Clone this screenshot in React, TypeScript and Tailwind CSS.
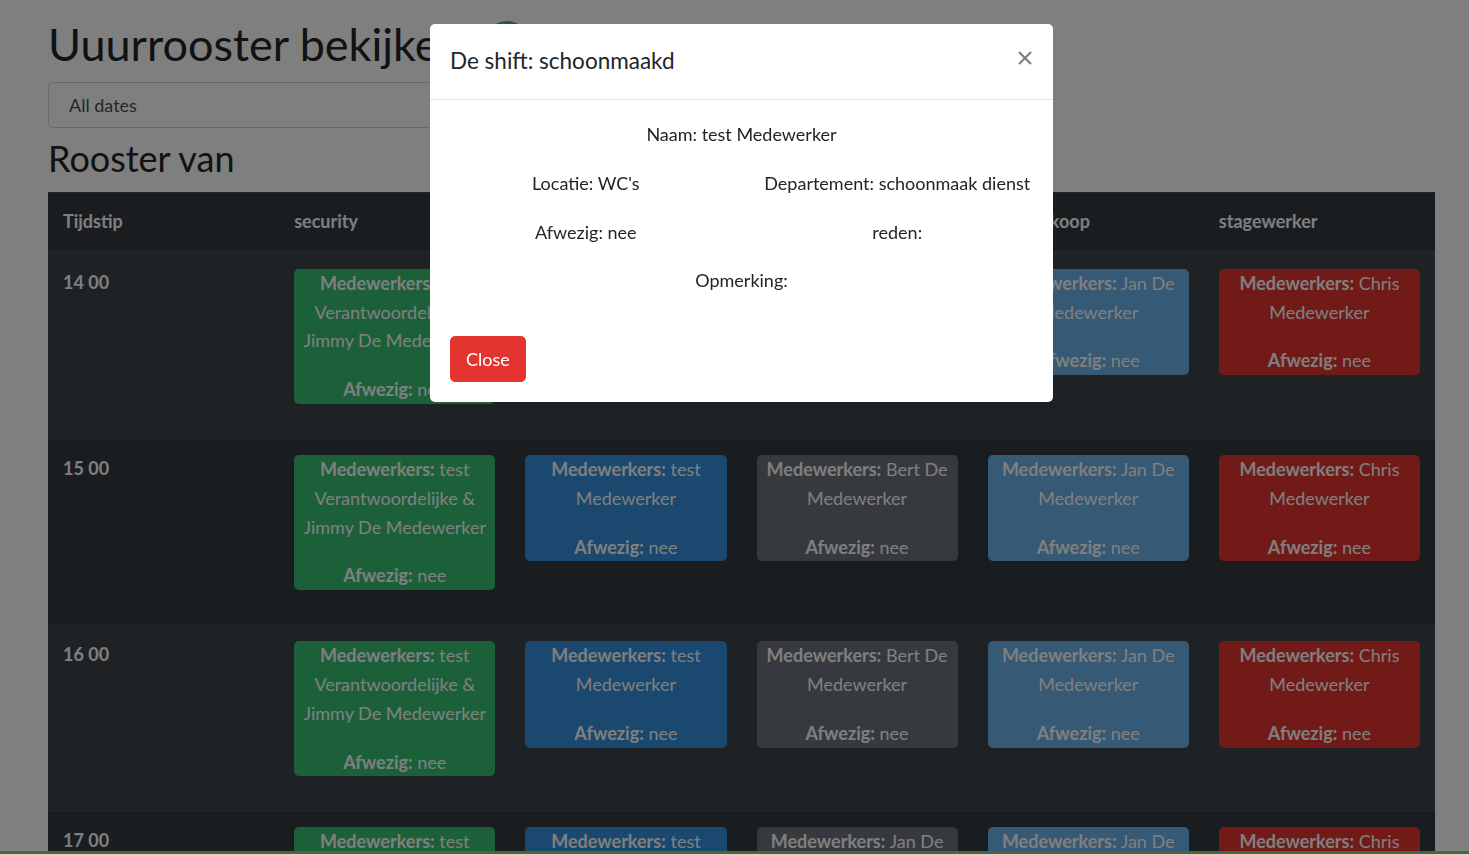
import { Fragment } from "react";

interface Shift {
  color: string;
  names: string[];
}

const columns = ["Tijdstip", "security", "schoonmaak dienst", "bar", "voorverkoop", "stagewerker"];

const baseRow: Shift[] = [
  { color: "bg-[#38c172]", names: ["test", "Verantwoordelijke &", "Jimmy De Medewerker"] },
  { color: "bg-[#3490dc]", names: ["test", "Medewerker"] },
  { color: "bg-[#6c757d]", names: ["Bert De", "Medewerker"] },
  { color: "bg-[#6cb2eb]", names: ["Jan De", "Medewerker"] },
  { color: "bg-[#e3342f]", names: ["Chris", "Medewerker"] },
];

const rows: { time: string; shifts: Shift[] }[] = [
  { time: "14 00", shifts: baseRow },
  { time: "15 00", shifts: baseRow },
  { time: "16 00", shifts: baseRow },
  {
    time: "17 00",
    shifts: [
      baseRow[0],
      baseRow[1],
      { color: "bg-[#6c757d]", names: ["Jan De", "Medewerker"] },
      baseRow[3],
      baseRow[4],
    ],
  },
];

function ShiftCard({ shift }: { shift: Shift }) {
  return (
    <div className={`${shift.color} mb-5 rounded-[5px] px-1 text-center text-white`}>
      <p className="mb-5">
        {shift.names.map((n, i) => (
          <Fragment key={i}>
            {i === 0 ? (
              <>
                <b className="font-bold">Medewerkers:</b> {n}
              </>
            ) : (
              n
            )}
            {i < shift.names.length - 1 && <br />}
          </Fragment>
        ))}
      </p>
      <p>
        <b className="font-bold">Afwezig:</b> nee
      </p>
    </div>
  );
}

function ShiftModal() {
  return (
    <div className="fixed inset-0 bg-black/50">
      <div className="ml-[430px] mt-[24px] w-[623px] rounded-[5px] bg-white text-[#212529]">
        <div className="flex h-[76px] items-start justify-between border-b border-[#dee2e6] px-5 pt-5">
          <h5 className="text-[22.5px] leading-[33.75px]">De shift: schoonmaakd</h5>
          <svg width="14" height="14" viewBox="0 0 14 14" className="mr-[1px] mt-[7px]">
            <path d="M1 1L13 13M13 1L1 13" stroke="#808080" strokeWidth="2.2" fill="none" />
          </svg>
        </div>
        <div className="pt-5 text-center">
          <p className="mb-5">Naam: test Medewerker</p>
          <div className="mb-5 grid grid-cols-2">
            <p>Locatie: WC's</p>
            <p>Departement: schoonmaak dienst</p>
          </div>
          <div className="mb-5 grid grid-cols-2">
            <p>Afwezig: nee</p>
            <p>reden:</p>
          </div>
          <p className="mb-[41px]">Opmerking:</p>
        </div>
        <div className="px-5 pb-5">
          <button className="rounded-[5px] border border-[#e3342f] bg-[#e3342f] px-[15px] py-[7.5px] text-white">
            Close
          </button>
        </div>
      </div>
    </div>
  );
}

export default function App() {
  return (
    <div className="relative h-screen overflow-hidden bg-white font-['Lato',sans-serif] text-[18px] leading-[28.8px] text-[#212529]">
      <div className="pl-[48px] pr-[34px] pt-[17px]">
        <div className="flex items-center">
          <h1 className="text-[45px] leading-[54px]">Uuurrooster bekijken</h1>
          <div className="ml-5 h-[46px] w-[46px] rounded-full bg-[#38c172]" />
        </div>
        <div className="mt-[11px] flex h-[46px] w-[620px] items-center rounded-[5px] border border-[#ced4da] pl-5 text-[#495057]">
          All dates
        </div>
        <h2 className="mb-[11.4px] mt-[9.4px] text-[36px] leading-[43.2px]">Rooster van</h2>

        <div className="bg-[#343a40] text-white">
          <div className="grid grid-cols-6 border-b-2 border-t border-[#454d55] font-bold">
            {columns.map((c) => (
              <div key={c} className="px-[15px] pb-[15px] pt-[14px]">
                {c}
              </div>
            ))}
          </div>
          {rows.map((row, idx) => (
            <div
              key={row.time}
              className={`grid grid-cols-6 border-t border-[#454d55] ${idx % 2 === 0 ? "bg-[#3e444a]" : ""}`}
            >
              <div className="px-[15px] pb-[15px] pt-[14px] font-bold">{row.time}</div>
              {row.shifts.map((s, i) => (
                <div key={i} className="px-[15px] pb-[15px] pt-[15px]">
                  <ShiftCard shift={s} />
                </div>
              ))}
            </div>
          ))}
        </div>
      </div>
      <div className="fixed bottom-0 left-0 right-0 h-[3px] bg-[#78dc78]" />
      <ShiftModal />
    </div>
  );
}
